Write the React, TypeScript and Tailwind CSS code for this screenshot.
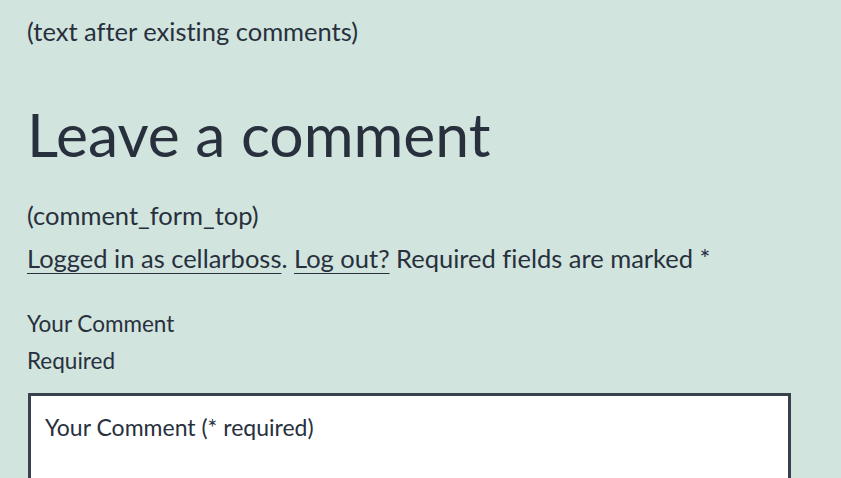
export default function App() {
  return (
    <div className="min-h-[478px] w-full bg-[#d1e4dd] text-[#28303d] overflow-hidden [font-variant-ligatures:none]" style={{ fontFamily: 'Lato, "Open Sans", sans-serif' }}>
      <div className="pl-[27px] pr-[50px]">
        <p className="pt-[10px] text-[25.5px] leading-[42px]">(text after existing comments)</p>
        <h2 className="mt-[43px] text-[60.6px] leading-[78px] font-normal">Leave a comment</h2>
        <p className="mt-[21px] text-[25.5px] leading-[42px]">(comment_form_top)</p>
        <p className="mt-[1px] text-[25.5px] leading-[42px]">
          <a href="#" className="underline underline-offset-[5px] decoration-1">Logged in as cellarboss</a>.{" "}
          <a href="#" className="underline underline-offset-[5px] decoration-1">Log out?</a>{" "}
          Required fields are marked *
        </p>
        <div className="mt-[26px] text-[22.5px] leading-[37px]">
          <div>Your Comment</div>
          <div>Required</div>
        </div>
        <div className="mt-[14px] ml-[1px] w-[763px] h-[120px] border-[3px] border-[#39414d] bg-white px-[14px] pt-[14px] text-[23px] leading-[34px] text-[#28303d]">
          Your Comment (* required)
        </div>
      </div>
    </div>
  );
}
